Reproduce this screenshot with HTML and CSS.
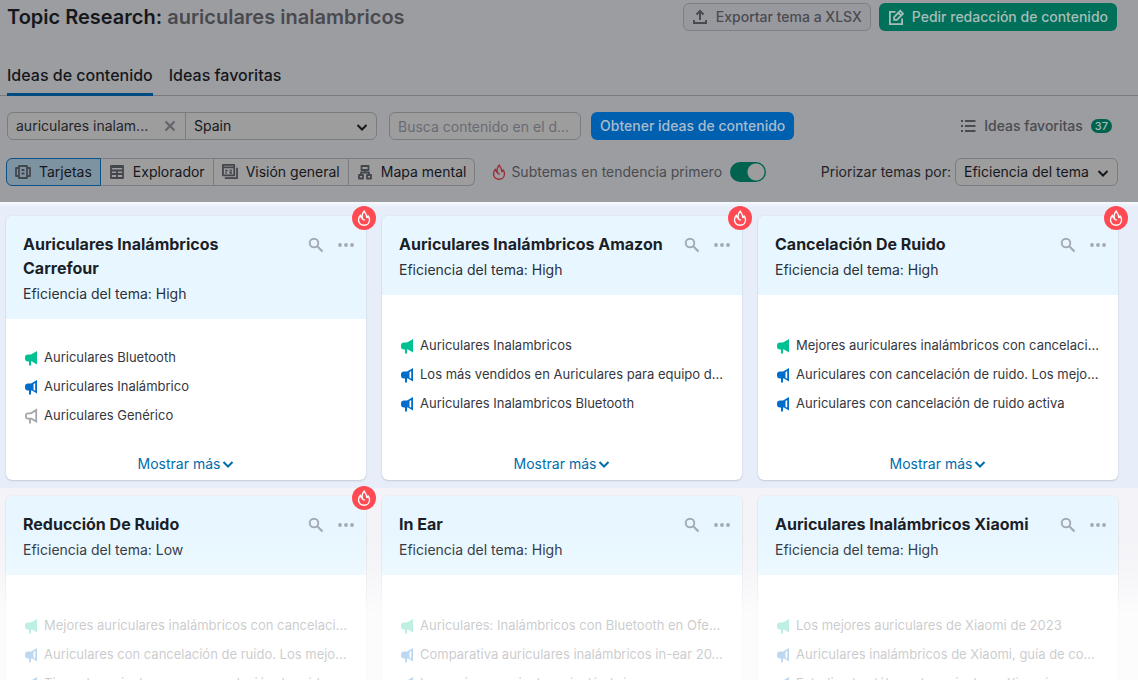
FILE: index.html
```
<!DOCTYPE html>
<html lang="es">
<head>
<meta charset="utf-8">
<title>Topic Research</title>
<link rel="stylesheet" href="styles.css">
</head>
<body>
<svg class="sprite" aria-hidden="true">
  <symbol id="i-flame" viewBox="0 0 16 16"><path d="M8.400 1C8.600 3.300 11.200 4.300 10.700 7.600C11.600 7.300 12 6.600 12.100 5.900C13 7.100 13.500 8.500 13.500 9.900C13.500 12.900 11.200 15.200 8 15.200C4.800 15.200 2.500 12.900 2.500 9.900C2.500 8.200 3.100 6.600 4.400 5.200C4.400 6.700 5 7.700 6.200 8.300C5.800 5.300 6.500 2.800 8.400 1Z" fill="none" stroke="currentColor" stroke-width="1.400" stroke-linejoin="round"/><path d="M6.200 8.300C6.500 9.200 7.300 9.900 8.200 10" fill="none" stroke="currentColor" stroke-width="1.400" stroke-linecap="round"/></symbol>
  <symbol id="i-search" viewBox="0 0 16 16"><circle cx="6" cy="6" r="4.300" fill="none" stroke="currentColor" stroke-width="1.900"/><path d="M9.300 9.300L14.500 14.500" stroke="currentColor" stroke-width="2.200"/></symbol>
  <symbol id="i-dots" viewBox="0 0 16 16"><circle cx="2" cy="8" r="1.900" fill="currentColor"/><circle cx="8" cy="8" r="1.900" fill="currentColor"/><circle cx="14" cy="8" r="1.900" fill="currentColor"/></symbol>
  <symbol id="i-chevron" viewBox="0 0 12 12"><path d="M1.500 4L6 8.500L10.500 4" fill="none" stroke="currentColor" stroke-width="2"/></symbol>
  <symbol id="i-horn-full" viewBox="0 0 14 16"><path d="M13 1V14.500L8 11.500H7V15.500H5V11.500H4A3 3 0 0 1 1 8.500V7.500A3 3 0 0 1 4 4.500H7Z" fill="currentColor"/></symbol>
  <symbol id="i-horn-half" viewBox="0 0 14 16"><path fill-rule="evenodd" d="M13 1V14.500L8 11.500H7V15.500H5V11.500H4A3 3 0 0 1 1 8.500V7.500A3 3 0 0 1 4 4.500H7ZM9.500 5V10.800L11.200 11.700V4Z" fill="currentColor"/></symbol>
  <symbol id="i-horn-line" viewBox="0 0 14 16"><path d="M12.200 2V13.500L7.500 10.700H4A2 2 0 0 1 1.900 8.700V7.300A2 2 0 0 1 4 5.300H7ZM6 11V15.500" fill="none" stroke="currentColor" stroke-width="1.800"/></symbol>
</svg>

<header class="top">
  <div class="title-row">
    <h1 class="title">Topic Research: <span class="title-query">auriculares inalambricos</span></h1>
    <div class="title-actions">
      <button class="btn btn-export" type="button"><svg class="i16" viewBox="0 0 16 16"><path d="M8 11V2.500M4.500 5.500L8 2L11.500 5.500M2 11V14H14V11" fill="none" stroke="currentColor" stroke-width="2"/></svg>Exportar tema a XLSX</button>
      <button class="btn btn-order" type="button"><svg class="i16" viewBox="0 0 17 17"><path d="M8 3H2V16H15V10M6.500 11.500V8.500L13 2L16 5L9.500 11.500ZM11 4L14 7" fill="none" stroke="currentColor" stroke-width="1.900"/></svg>Pedir redacción de contenido</button>
    </div>
  </div>
  <nav class="tabs">
    <a class="tab tab-active" href="#ideas">Ideas de contenido</a>
    <a class="tab" href="#favoritas">Ideas favoritas</a>
  </nav>
  <form class="filters">
    <div class="combo">
      <div class="query"><input class="query-input" aria-label="Tema" value="auriculares inalam..."><button class="clear" type="button" aria-label="Borrar"><svg class="i12" viewBox="0 0 12 12"><path d="M1.500 1.500L10.500 10.500M10.500 1.500L1.500 10.500" stroke="currentColor" stroke-width="2.200"/></svg></button></div>
      <div class="pick country"><select class="select" aria-label="País"><option>Spain</option></select><svg class="i12 pick-arrow"><use href="#i-chevron"/></svg></div>
    </div>
    <input class="domain" aria-label="Dominio" placeholder="Busca contenido en el d...">
    <button class="btn btn-get" type="button">Obtener ideas de contenido</button>
    <a class="favorites" href="#favoritas"><svg class="i16" viewBox="0 0 16 16"><path d="M1 3H3M1 8H3M1 13H3M5 3H15.500M5 8H15.500M5 13H15.500" stroke="currentColor" stroke-width="2"/></svg>Ideas favoritas<span class="count">37</span></a>
  </form>
  <div class="view-row">
    <div class="views">
      <button class="view view-active" type="button"><svg class="i16" viewBox="0 0 16 16"><path d="M4 2H12V14H4ZM4 4H1V12H4M12 4H15V12H12M6.500 6H9.500M6.500 9.500H9.500" fill="none" stroke="currentColor" stroke-width="1.800" stroke-linejoin="round"/></svg>Tarjetas</button>
      <button class="view" type="button"><svg class="i16" viewBox="0 0 16 16"><path d="M2 2H14V14H2ZM2 3H14M2 6.500H14M2 10H14M8 6V14" fill="none" stroke="currentColor" stroke-width="1.800" stroke-linejoin="round"/></svg>Explorador</button>
      <button class="view" type="button"><svg class="i16" viewBox="1 1 17 17"><path d="M2 2H14V13H2ZM2 4.500H14M4.500 8H7M4.500 10.500H6M9 8H11.500M9 10.500H11.500M4 16H17V5" fill="none" stroke="currentColor" stroke-width="1.900" stroke-linejoin="round"/></svg>Visión general</button>
      <button class="view" type="button"><svg class="i16" viewBox="0 0 16 16"><path d="M4.500 2H11.500V6H4.500ZM2 11H6V14.500H2ZM10 11H14V14.500H10ZM8 6V8.500M4 11V8.500H12V11" fill="none" stroke="currentColor" stroke-width="1.800" stroke-linejoin="round"/></svg>Mapa mental</button>
    </div>
    <label class="trend"><svg class="i16 trend-flame"><use href="#i-flame"/></svg>Subtemas en tendencia primero<input class="toggle" type="checkbox" checked></label>
    <div class="priority"><label for="prio">Priorizar temas por:</label><div class="pick prio"><select class="select" id="prio"><option>Eficiencia del tema</option></select><svg class="i12 pick-arrow"><use href="#i-chevron"/></svg></div></div>
  </div>
</header>

<main class="results">
  <section class="band band-focus">
    <article class="card">
      <span class="hot"><svg class="i16"><use href="#i-flame"/></svg></span>
      <div class="card-head">
        <div class="card-line"><h2 class="card-title">Auriculares Inalámbricos Carrefour</h2><button class="tool" type="button" aria-label="Buscar"><svg class="i16"><use href="#i-search"/></svg></button><button class="tool" type="button" aria-label="Más"><svg class="i16"><use href="#i-dots"/></svg></button></div>
        <p class="eff">Eficiencia del tema: <span>High</span></p>
      </div>
      <ul class="ideas">
        <li class="idea"><svg class="horn green"><use href="#i-horn-full"/></svg>Auriculares Bluetooth</li>
        <li class="idea"><svg class="horn blue"><use href="#i-horn-half"/></svg>Auriculares Inalámbrico</li>
        <li class="idea"><svg class="horn grey"><use href="#i-horn-line"/></svg>Auriculares Genérico</li>
      </ul>
      <a class="more" href="#mas">Mostrar más<svg class="i12"><use href="#i-chevron"/></svg></a>
    </article>
    <article class="card">
      <span class="hot"><svg class="i16"><use href="#i-flame"/></svg></span>
      <div class="card-head">
        <div class="card-line"><h2 class="card-title">Auriculares Inalámbricos Amazon</h2><button class="tool" type="button" aria-label="Buscar"><svg class="i16"><use href="#i-search"/></svg></button><button class="tool" type="button" aria-label="Más"><svg class="i16"><use href="#i-dots"/></svg></button></div>
        <p class="eff">Eficiencia del tema: <span>High</span></p>
      </div>
      <ul class="ideas">
        <li class="idea"><svg class="horn green"><use href="#i-horn-full"/></svg>Auriculares Inalambricos</li>
        <li class="idea"><svg class="horn blue"><use href="#i-horn-half"/></svg>Los más vendidos en Auriculares para equipo d...</li>
        <li class="idea"><svg class="horn blue"><use href="#i-horn-half"/></svg>Auriculares Inalambricos Bluetooth</li>
      </ul>
      <a class="more" href="#mas">Mostrar más<svg class="i12"><use href="#i-chevron"/></svg></a>
    </article>
    <article class="card">
      <span class="hot"><svg class="i16"><use href="#i-flame"/></svg></span>
      <div class="card-head">
        <div class="card-line"><h2 class="card-title">Cancelación De Ruido</h2><button class="tool" type="button" aria-label="Buscar"><svg class="i16"><use href="#i-search"/></svg></button><button class="tool" type="button" aria-label="Más"><svg class="i16"><use href="#i-dots"/></svg></button></div>
        <p class="eff">Eficiencia del tema: <span>High</span></p>
      </div>
      <ul class="ideas">
        <li class="idea"><svg class="horn green"><use href="#i-horn-full"/></svg>Mejores auriculares inalámbricos con cancelaci...</li>
        <li class="idea"><svg class="horn blue"><use href="#i-horn-half"/></svg>Auriculares con cancelación de ruido. Los mejo...</li>
        <li class="idea"><svg class="horn blue"><use href="#i-horn-half"/></svg>Auriculares con cancelación de ruido activa</li>
      </ul>
      <a class="more" href="#mas">Mostrar más<svg class="i12"><use href="#i-chevron"/></svg></a>
    </article>
  </section>
  <section class="band band-fade">
    <article class="card">
      <span class="hot"><svg class="i16"><use href="#i-flame"/></svg></span>
      <div class="card-head">
        <div class="card-line"><h2 class="card-title">Reducción De Ruido</h2><button class="tool" type="button" aria-label="Buscar"><svg class="i16"><use href="#i-search"/></svg></button><button class="tool" type="button" aria-label="Más"><svg class="i16"><use href="#i-dots"/></svg></button></div>
        <p class="eff">Eficiencia del tema: <span>Low</span></p>
      </div>
      <ul class="ideas">
        <li class="idea"><svg class="horn green"><use href="#i-horn-full"/></svg>Mejores auriculares inalámbricos con cancelaci...</li>
        <li class="idea"><svg class="horn blue"><use href="#i-horn-half"/></svg>Auriculares con cancelación de ruido. Los mejo...</li>
        <li class="idea"><svg class="horn blue"><use href="#i-horn-half"/></svg>Tipos de auriculares con cancelación de ruido</li>
      </ul>
      <a class="more" href="#mas">Mostrar más<svg class="i12"><use href="#i-chevron"/></svg></a>
    </article>
    <article class="card">
      <div class="card-head">
        <div class="card-line"><h2 class="card-title">In Ear</h2><button class="tool" type="button" aria-label="Buscar"><svg class="i16"><use href="#i-search"/></svg></button><button class="tool" type="button" aria-label="Más"><svg class="i16"><use href="#i-dots"/></svg></button></div>
        <p class="eff">Eficiencia del tema: <span>High</span></p>
      </div>
      <ul class="ideas">
        <li class="idea"><svg class="horn green"><use href="#i-horn-full"/></svg>Auriculares: Inalámbricos con Bluetooth en Ofe...</li>
        <li class="idea"><svg class="horn blue"><use href="#i-horn-half"/></svg>Comparativa auriculares inalámbricos in-ear 20...</li>
        <li class="idea"><svg class="horn blue"><use href="#i-horn-half"/></svg>Los mejores auriculares inalámbricos</li>
      </ul>
      <a class="more" href="#mas">Mostrar más<svg class="i12"><use href="#i-chevron"/></svg></a>
    </article>
    <article class="card">
      <div class="card-head">
        <div class="card-line"><h2 class="card-title">Auriculares Inalámbricos Xiaomi</h2><button class="tool" type="button" aria-label="Buscar"><svg class="i16"><use href="#i-search"/></svg></button><button class="tool" type="button" aria-label="Más"><svg class="i16"><use href="#i-dots"/></svg></button></div>
        <p class="eff">Eficiencia del tema: <span>High</span></p>
      </div>
      <ul class="ideas">
        <li class="idea"><svg class="horn green"><use href="#i-horn-full"/></svg>Los mejores auriculares de Xiaomi de 2023</li>
        <li class="idea"><svg class="horn blue"><use href="#i-horn-half"/></svg>Auriculares inalámbricos de Xiaomi, guía de co...</li>
        <li class="idea"><svg class="horn blue"><use href="#i-horn-half"/></svg>Estudia el catálogo de auriculares Xiaomi</li>
      </ul>
      <a class="more" href="#mas">Mostrar más<svg class="i12"><use href="#i-chevron"/></svg></a>
    </article>
  </section>
</main>
</body>
</html>
```
FILE: styles.css
```
* { box-sizing: border-box; }
body {
  margin: 0;
  height: 100vh;
  overflow: hidden;
  display: flex;
  flex-direction: column;
  background: #fff;
  color: #1b1f28;
  font: 14px/20px Inter, "Liberation Sans", sans-serif;
}
h1, h2, p, ul { margin: 0; padding: 0; }
button, input, select { font: inherit; color: inherit; margin: 0; }
button { cursor: pointer; }
a { color: inherit; text-decoration: none; }
svg { flex: none; display: block; }
.sprite { position: absolute; width: 0; height: 0; }
.i12 { width: 12px; height: 12px; }
.i16 { width: 16px; height: 16px; }

/* dimmed page top */
.top { flex: none; background: #9c9da0; padding-bottom: 16px; }
.title-row { display: flex; justify-content: space-between; padding: 3px 21px 0 7px; }
.title { font-size: 20px; line-height: 28px; font-weight: 600; color: #16171c; }
.title-query { color: #494a50; }
.title-actions { display: flex; gap: 8px; }
.btn {
  display: flex; align-items: center; gap: 8px;
  height: 28px; padding: 0 9px;
  border: 0; border-radius: 6px;
  font-weight: 500; white-space: nowrap;
}
.btn-export { padding: 0 8px; background: #98999e; border: 1px solid #7e7f85; color: #4a4b51; }
.btn-order { background: #00705a; color: #a9bdb8; }
.btn-get { background: #0060b0; color: #a9bccd; }

.tabs { display: flex; gap: 16px; padding: 0 7px; margin-top: 30px; border-bottom: 1px solid #7b7c80; }
.tab { font-size: 16px; line-height: 24px; font-weight: 500; padding: 2px 0 6px; margin-bottom: -1px; color: #15171c; border-bottom: 3px solid transparent; }
.tab-active { border-color: #004b82; }

.filters { display: flex; align-items: center; padding: 0 26px 0 7px; margin-top: 16px; }
.combo { display: flex; width: 370px; height: 28px; border: 1px solid #7b7c82; border-radius: 6px; background: #9d9d9e; }
.query { display: flex; align-items: center; width: 178px; border-right: 1px solid #7b7c82; padding: 0 8px; }
.query-input { flex: 1; min-width: 0; padding: 0; border: 0; background: none; color: #24252a; }
.clear { display: flex; padding: 0 1px; border: 0; background: none; color: #64656b; }
.pick { position: relative; display: flex; }
.country { flex: 1; }
.select { appearance: none; width: 100%; border: 0; background: none; padding: 0 28px 0 8px; color: #15171c; }
.pick-arrow { position: absolute; right: 8px; top: 8px; pointer-events: none; color: #15171c; }
.domain { width: 192px; height: 28px; margin: 0 10px 0 12px; padding: 0 8px; border: 1px solid #7b7c82; border-radius: 6px; background: #9d9d9e; }
.domain::placeholder { color: #6a6b72; opacity: 1; }
.favorites { display: flex; align-items: center; gap: 8px; margin-left: auto; color: #4a4b51; font-weight: 500; }
.count { min-width: 21px; padding: 0 4px; border-radius: 7px; background: #00634f; color: #a9bdb8; font-size: 11px; line-height: 14px; text-align: center; }

.view-row { display: flex; align-items: center; margin-top: 18px; padding: 0 20px 0 6px; }
.views { display: flex; }
.view {
  display: flex; align-items: center; gap: 8px;
  height: 28px; padding: 0 8px;
  border: 1px solid #7b7c82; border-left-width: 0;
  background: #9d9d9e; color: #15171c; white-space: nowrap;
}
.view svg { color: #44464d; }
.view:last-child { border-radius: 0 6px 6px 0; }
.view-active { border: 1px solid #0d5287; border-radius: 6px 0 0 6px; background: #7d93a2; }
.trend { display: flex; align-items: center; margin-left: 16px; color: #4a4b51; gap: 4px; white-space: nowrap; }
.trend-flame { color: #9e2f38; }
.toggle { appearance: none; width: 36px; height: 20px; margin: 0 0 0 4px; border-radius: 10px; background: radial-gradient(circle at 26px 10px, #9d9d9e 8px, #00634f 9px); }
.priority { display: flex; align-items: center; gap: 4px; margin-left: auto; color: #24252a; white-space: nowrap; }
.prio { width: 163px; height: 28px; border: 1px solid #7b7c82; border-radius: 6px; background: #9d9d9e; }

/* topic cards */
.results { flex: 1; min-height: 0; overflow: hidden; }
.band { position: relative; display: grid; grid-template-columns: repeat(3, 1fr); gap: 16px; padding: 14px 20px 8px 6px; }
.band-focus { background: linear-gradient(#f6f9fd 0, #e7eefa 5px); }
.band-fade { background: #f4f4f8; padding-top: 8px; }
.band-fade::after {
  content: ""; position: absolute; inset: 0; pointer-events: none;
  background: linear-gradient(rgba(255,255,255,0) 40px, rgba(255,255,255,.08) 68px, rgba(255,255,255,.25) 86px, rgba(255,255,255,.74) 128px);
}
.card {
  position: relative; display: flex; flex-direction: column;
  min-width: 0; min-height: 264px;
  border-radius: 6px; background: #fff;
  box-shadow: 0 0 1px rgba(25,27,35,.2), 0 1px 2px rgba(25,27,35,.14);
}
.hot {
  position: absolute; top: -10px; right: -10px;
  display: flex; align-items: center; justify-content: center;
  width: 24px; height: 24px; border-radius: 50%;
  background: #ff4953; color: #fff;
}
.card-head { padding: 16px 12px 15px 17px; border-radius: 6px 6px 0 0; background: #e8f7ff; }
.card-line { display: flex; align-items: flex-start; gap: 14px; }
.card-title { flex: 1; font-size: 16px; line-height: 24px; font-weight: 700; }
.tool { display: flex; padding: 5px 0 0; border: 0; background: none; color: #a3aab3; }
.eff { margin-top: 4px; color: #2b303b; }
.ideas { flex: 1; display: flex; flex-direction: column; justify-content: center; list-style: none; padding: 0 18px; }
.idea { display: flex; align-items: center; gap: 6px; font-size: 13px; line-height: 29px; color: #35373e; white-space: nowrap; }
.horn { width: 14px; height: 16px; }
.green { color: #00c192; }
.blue { color: #006dca; }
.grey { color: #a5a6ab; }
.more { display: flex; align-items: center; align-self: center; gap: 2px; padding-bottom: 6px; color: #006dab; }
```
